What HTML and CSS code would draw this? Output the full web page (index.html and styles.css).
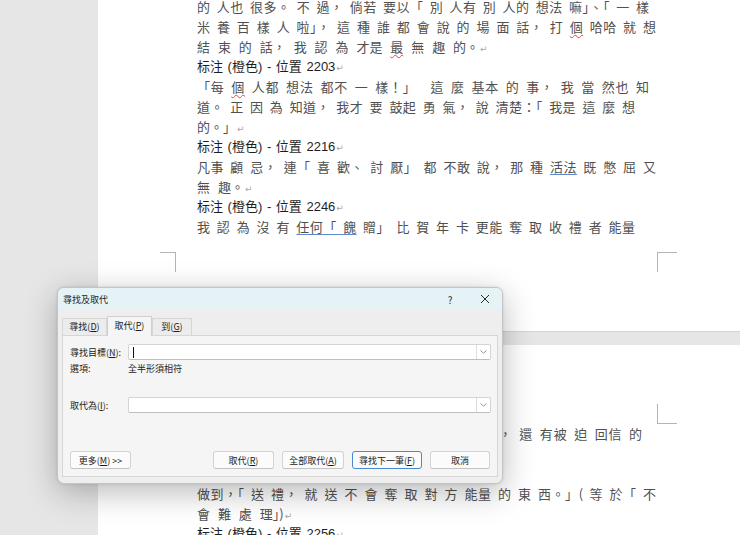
FILE: index.html
```html
<!DOCTYPE html>
<html lang="zh-Hant">
<head>
    <meta charset="UTF-8">
    <meta name="viewport" content="width=device-width, initial-scale=1.0">
    <title>尋找及取代</title>
    <link rel="stylesheet" href="styles.css">
</head>
<body>
<div class="workspace">
    <div class="pages">
        <!-- bottom of the previous page -->
        <div class="page page-top">
            <div class="text">
                <div class="ln w452">的 人也 很多。 不 過， 倘若 要以「 別 人有 別 人的 想法 嘛」、「 一 樣</div>
                <div class="ln">米 養 百 樣 人 啦」， 這 種 誰 都 會 說 的 場 面 話， 打 <span class="sp">個</span> 哈哈 就 想</div>
                <div class="ln end">結 束 的 話， 我 認 為 才是 <span class="sp">最</span> 無 趣 的。<span class="pm">↵</span></div>
                <div class="ln end note">标注 (橙色) - 位置 2203<span class="pm">↵</span></div>
                <div class="ln w452">「每 <span class="sp">個</span> 人都 想法 都不 一 樣！」　 這 麼 基本 的 事， 我 當 然也 知</div>
                <div class="ln w438">道。 正 因 為 知道， 我才 要 鼓起 勇 氣， 說 清楚：「 我是 這 麼 想</div>
                <div class="ln end">的。」<span class="pm">↵</span></div>
                <div class="ln end note">标注 (橙色) - 位置 2216<span class="pm">↵</span></div>
                <div class="ln">凡事 顧 忌， 連「 喜 歡、 討 厭」 都 不敢 說， 那 種 <span class="gr">活法</span> 既 憋 屈 又</div>
                <div class="ln end">無 趣。<span class="pm">↵</span></div>
                <div class="ln end note">标注 (橙色) - 位置 2246<span class="pm">↵</span></div>
                <div class="ln w438">我 認 為 沒 有 <span class="gr">任何「 餽</span> 贈」 比 賀 年 卡 更能 奪 取 收 禮 者 能量</div>
            </div>
            <div class="marks">
                <span class="mk mk-l"></span>
                <span class="mk mk-r"></span>
            </div>
        </div>

        <!-- next page -->
        <div class="page page-next">
            <div class="marks">
                <span class="mk mk-l"></span>
                <span class="mk mk-r"></span>
            </div>
            <div class="text">
                <div class="ln w445">如果 收到 賀 年 卡 就 會 覺得 自己 必須 回覆， 還 有被 迫 回信 的</div>
                <div class="ln end"></div>
                <div class="ln end"></div>
                <div class="ln">做到，「 送 禮， 就 送 不 會 奪 取 對 方 能量 的 東 西。」( 等 於「 不</div>
                <div class="ln end">會 難 處 理」)<span class="pm">↵</span></div>
                <div class="ln end note">标注 (橙色) - 位置 2256<span class="pm">↵</span></div>
            </div>
        </div>
    </div>

    <div class="dialog">
        <div class="titlebar">
            <span class="title">尋找及取代</span>
            <span class="tb-btn help">?</span>
            <span class="tb-btn close">
                <svg width="10" height="10" viewBox="0 0 10 10"><path d="M1 1L9 9M9 1L1 9" stroke="#2b2b2b" stroke-width="1" fill="none"/></svg>
            </span>
        </div>

        <div class="tabs">
            <span class="tab">尋找(<u>D</u>)</span>
            <span class="tab active">取代(<u>P</u>)</span>
            <span class="tab tab-goto">到(<u>G</u>)</span>
        </div>

        <div class="panel">
            <div class="field f-find">
                <label class="lbl">尋找目標(<u>N</u>):</label>
                <div class="combo">
                    <span class="caret"></span>
                    <span class="drop"><svg width="7" height="4" viewBox="0 0 7 4"><path d="M0.5 0.5L3.5 3.2L6.5 0.5" stroke="#8a8a8a" stroke-width="0.9" fill="none"/></svg></span>
                </div>
            </div>
            <div class="field f-opts">
                <span class="lbl">選項:</span>
                <span>全半形須相符</span>
            </div>
            <div class="field f-repl">
                <label class="lbl">取代為(<u>I</u>):</label>
                <div class="combo">
                    <span class="drop"><svg width="7" height="4" viewBox="0 0 7 4"><path d="M0.5 0.5L3.5 3.2L6.5 0.5" stroke="#8a8a8a" stroke-width="0.9" fill="none"/></svg></span>
                </div>
            </div>

            <div class="buttons">
                <button class="btn btn-more">更多(<u>M</u>) &gt;&gt;</button>
                <button class="btn btn-rep">取代(<u>R</u>)</button>
                <button class="btn btn-all">全部取代(<u>A</u>)</button>
                <button class="btn btn-next">尋找下一筆(<u>F</u>)</button>
                <button class="btn btn-cancel">取消</button>
            </div>
        </div>
    </div>
</div>
</body>
</html>
```

FILE: styles.css
```css
*{
    margin: 0;
    padding: 0;
    box-sizing: border-box;
}

body{
    background-color: #e6e6e6;
    width: 740px;
    height: 535px;
    overflow: hidden;
}

.workspace{
    position: relative;
    height: 535px;
    overflow: hidden;
}

/* document pages */
.pages{
    margin-left: 98px;
    display: flex;
    flex-direction: column;
    gap: 14px;
}

.page{
    background-color: #fff;
    width: 642px;
    flex: none;
}

.page-top{
    height: 331px;
    box-shadow: 0 1px 0 #d5d5d5;
}

.page-next{
    height: 320px;
}

.text{
    padding-left: 99px;
    font-family: "Noto Sans CJK TC", sans-serif;
    font-size: 13px;
    color: #505050;
}

.page-top .text{
    margin-top: -3px;
}

.ln{
    width: 459px;
    height: 20px;
    line-height: 20px;
    text-align: justify;
    text-align-last: justify;
    word-spacing: 3px;
}

.ln.end{
    text-align-last: left;
    word-spacing: 5px;
}

.w452{ width: 452px; }
.w445{ width: 445px; }
.w438{ width: 438px; }

.ln.note{
    font-family: "Liberation Sans", "Noto Sans CJK TC", sans-serif;
    color: #1e1e1e;
    word-spacing: 1px;
}

.pm{
    font-family: "DejaVu Sans", sans-serif;
    font-size: 9px;
    color: #a8a8a8;
    margin-left: 1px;
}

.sp{
    text-decoration: underline wavy #e2463b;
    text-decoration-thickness: 1px;
    text-underline-offset: 2px;
}

.gr{
    text-decoration: underline #5f88d0;
    text-underline-offset: 2px;
}

/* margin corner marks */
.marks{
    display: flex;
    justify-content: space-between;
    width: 517px;
    margin-left: 62px;
}

.mk{
    width: 16px;
    height: 20px;
    border: 0 solid #b4b4b4;
}

.mk-r{
    width: 20px;
}

.page-top .marks{ margin-top: 15px; }
.page-top .mk-l{ border-top-width: 1px; border-right-width: 1px; }
.page-top .mk-r{ border-top-width: 1px; border-left-width: 1px; }

.page-next .marks{ margin-top: 59px; }
.page-next .mk-l{ border-bottom-width: 1px; border-right-width: 1px; }
.page-next .mk-r{ border-bottom-width: 1px; border-left-width: 1px; }

/* find & replace dialog */
.dialog{
    position: absolute;
    left: 57px;
    top: 287px;
    width: 446px;
    height: 197px;
    display: flex;
    flex-direction: column;
    background-color: #eeeeee;
    border: 1px solid #c4c4c4;
    border-radius: 7px;
    overflow: hidden;
    box-shadow: 0 8px 32px rgba(0, 0, 0, 0.28), 0 0 3px rgba(0, 0, 0, 0.12);
    font-family: "Noto Sans CJK TC", sans-serif;
    font-size: 9px;
    color: #1b1b1b;
}

.titlebar{
    height: 22px;
    flex: none;
    display: flex;
    align-items: center;
    background-color: #e6f3f6;
}

.title{
    flex: 1;
    padding-left: 5px;
}

.tb-btn{
    width: 34px;
    height: 22px;
    display: flex;
    align-items: center;
    justify-content: center;
    font-size: 10px;
    color: #2b2b2b;
}

.close{
    width: 35px;
}

.tabs{
    height: 19px;
    flex: none;
    margin: 6px 4px 0;
    display: flex;
    align-items: flex-end;
    position: relative;
    z-index: 1;
}

.tab{
    width: 45px;
    height: 17px;
    line-height: 15px;
    text-align: center;
    border: 1px solid #d6d6d6;
    border-bottom: none;
    background-color: #ececec;
}

.tab.active{
    height: 20px;
    margin-bottom: -1px;
    line-height: 18px;
    background-color: #f5f5f5;
    border-color: #d0d0d0;
}

.tab-goto{
    width: 40px;
}

.panel{
    height: 142px;
    flex: none;
    margin: 0 4px;
    padding: 0 6px 7px 7px;
    display: flex;
    flex-direction: column;
    background-color: #f5f5f5;
    border: 1px solid #d6d6d6;
}

.field{
    height: 16px;
    display: flex;
    align-items: center;
}

.f-find{ margin-top: 8px; }
.f-opts{ margin-top: 2px; height: 12px; }
.f-repl{ margin-top: 23px; }

.lbl{
    width: 58px;
    flex: none;
    white-space: nowrap;
}

.combo{
    flex: 1;
    height: 16px;
    display: flex;
    align-items: center;
    background-color: #fff;
    border: 1px solid #d4d4d4;
    border-bottom-color: #bdbdbd;
    border-radius: 2px;
}

.caret{
    width: 1px;
    height: 11px;
    margin-left: 4px;
    background-color: #111;
}

.drop{
    width: 14px;
    height: 14px;
    margin-left: auto;
    display: flex;
    align-items: center;
    justify-content: center;
    border-left: 1px solid #dddddd;
}

.buttons{
    margin-top: auto;
    padding-right: 1px;
    display: flex;
    gap: 8px;
}

.btn{
    height: 18px;
    font: inherit;
    color: #1b1b1b;
    background-color: #fbfbfb;
    border: 1px solid #d3d3d3;
    border-bottom-color: #c3c3c3;
    border-radius: 3px;
}

.btn-more{ width: 61px; margin-right: auto; }
.btn-rep{ width: 61px; }
.btn-all{ width: 62px; }
.btn-next{ width: 70px; border-color: #4a88cf; }
.btn-cancel{ width: 60px; }
```
